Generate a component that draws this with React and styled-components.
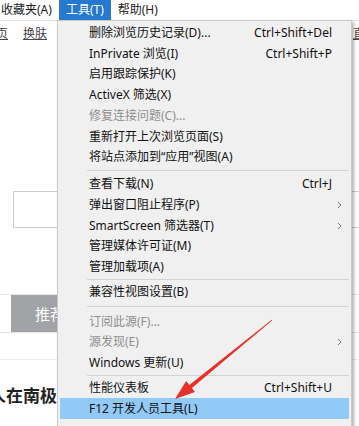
import styled, { createGlobalStyle } from "styled-components";

const GlobalStyle = createGlobalStyle`
    html, body {
        margin: 0;
        padding: 0;
        background: #fff;
    }
    body {
        font-family: "Noto Sans", "Noto Sans CJK SC", sans-serif;
    }
`;

const Screen = styled.div`
    position: relative;
    width: 359px;
    height: 426px;
    overflow: hidden;
    background: #fff;
`;

/* 顶部菜单栏 */
const MenuBar = styled.div`
    display: flex;
    height: 20px;
    margin-left: -6px;
    border-bottom: 1px solid #e2e2e2;
    font-size: 12px;
`;

const MenuBarItem = styled.div`
    padding: 0 7px;
    line-height: 20px;
    color: ${(p) => (p.$active ? "#fff" : "#1a1a1a")};
    background: ${(p) => (p.$active ? "#2579cf" : "transparent")};
`;

/* 页面内容（被菜单挡住的部分） */
const NavRow = styled.div`
    display: flex;
    align-items: center;
    gap: 15px;
    width: 377px;
    height: 24px;
    font-size: 12px;
`;

const NavLink = styled.a`
    color: #444;
    text-decoration: underline;
    margin-left: ${(p) => (p.$cut ? "-16px" : "0")};

    &:last-child {
        margin-left: auto;
    }
`;

const SearchBox = styled.div`
    margin: 146px 0 0 13px;
    width: 420px;
    height: 35px;
    border: 1px solid #cdcdcd;
`;

const TabBar = styled.div`
    display: flex;
    margin-top: 66px;
    width: 400px;
    height: 37px;
    border-top: 1px solid #e6e6e6;
    border-bottom: 1px solid #e6e6e6;
`;

const Tab = styled.div`
    margin-left: 11px;
    padding: 0 20px 0 24px;
    display: flex;
    align-items: center;
    background: #a1a3a7;
    color: #fff;
    font-size: 15px;
`;

const Divider = styled.div`
    margin-top: 26px;
    width: 400px;
    border-top: 1px solid #ececec;
`;

const Headline = styled.div`
    margin: 24px 0 0 -11px;
    font-size: 17px;
    font-weight: 700;
    line-height: 24px;
    color: #222;
    white-space: nowrap;
`;

/* 工具下拉菜单 */
const Dropdown = styled.div`
    position: absolute;
    left: 57px;
    top: 20px;
    width: 295px;
    box-sizing: border-box;
    padding: 1.5px 2px 20px;
    background: #f0f0f0;
    border: 1px solid #c9c9c9;
    box-shadow: 2px 2px 3px rgba(0, 0, 0, 0.3);
    font-size: 12px;
    z-index: 10;
`;

const Item = styled.div`
    display: grid;
    grid-template-columns: 1fr auto 17px;
    align-items: center;
    height: 20.75px;
    padding-left: 29px;
    line-height: 1;
    white-space: nowrap;
    color: ${(p) => (p.$disabled ? "#8e8e8e" : "#111")};
    background: ${(p) => (p.$active ? "#91c9f7" : "transparent")};
`;

const Shortcut = styled.span`
    text-align: right;
`;

const Chevron = styled.svg`
    margin-left: 5px;
`;

const Separator = styled.div`
    height: 1px;
    margin: ${(p) => p.$space}px 0 ${(p) => p.$space}px 27px;
    background: #d3d3d3;
`;

const Annotation = styled.svg`
    position: absolute;
    left: 0;
    top: 0;
    z-index: 20;
    pointer-events: none;
`;

const groups = [
    {
        space: 2.5,
        items: [
            { label: "删除浏览历史记录(D)...", key: "Ctrl+Shift+Del" },
            { label: "InPrivate 浏览(I)", key: "Ctrl+Shift+P" },
            { label: "启用跟踪保护(K)" },
            { label: "ActiveX 筛选(X)" },
            { label: "修复连接问题(C)...", disabled: true },
            { label: "重新打开上次浏览页面(S)" },
            { label: "将站点添加到“应用”视图(A)" },
        ],
    },
    {
        space: 1.5,
        items: [
            { label: "查看下载(N)", key: "Ctrl+J" },
            { label: "弹出窗口阻止程序(P)", sub: true },
            { label: "SmartScreen 筛选器(T)", sub: true },
            { label: "管理媒体许可证(M)" },
            { label: "管理加载项(A)" },
        ],
    },
    {
        space: 4,
        items: [{ label: "兼容性视图设置(B)" }],
    },
    {
        space: 1.5,
        items: [
            { label: "订阅此源(F)...", disabled: true },
            { label: "源发现(E)", disabled: true, sub: true },
            { label: "Windows 更新(U)" },
        ],
    },
    {
        items: [
            { label: "性能仪表板", key: "Ctrl+Shift+U" },
            { label: "F12 开发人员工具(L)", active: true },
        ],
    },
];

const MenuItem = ({ item }) => (
    <Item $disabled={item.disabled} $active={item.active}>
        <span>{item.label}</span>
        <Shortcut>{item.key}</Shortcut>
        <span>
            {item.sub && (
                <Chevron width="5" height="8" viewBox="0 0 5 8">
                    <polyline points="1,1 4,4 1,7" fill="none" stroke="#7a7a7a" strokeWidth="1" />
                </Chevron>
            )}
        </span>
    </Item>
);

const App = () => {
    return (
        <Screen>
            <GlobalStyle />

            <MenuBar>
                <MenuBarItem>收藏夹(A)</MenuBarItem>
                <MenuBarItem $active>工具(T)</MenuBarItem>
                <MenuBarItem>帮助(H)</MenuBarItem>
            </MenuBar>

            <NavRow>
                <NavLink $cut>首页</NavLink>
                <NavLink>换肤</NavLink>
                <NavLink>直播</NavLink>
            </NavRow>

            <SearchBox />

            <TabBar>
                <Tab>推荐</Tab>
            </TabBar>

            <Divider />

            <Headline>人在南极仁爱</Headline>

            <Dropdown>
                {groups.map((group, gi) => (
                    <div key={gi}>
                        {group.items.map((item) => (
                            <MenuItem key={item.label} item={item} />
                        ))}
                        {group.space && <Separator $space={group.space} />}
                    </div>
                ))}
            </Dropdown>

            {/* 红色标注箭头 */}
            <Annotation width="359" height="426" viewBox="0 0 359 426">
                <polygon
                    points="175,399 195,392 191.9,388.1 272.3,320.3 271.7,319.7 189.3,384.9 186.2,381"
                    fill="#e8302a"
                />
            </Annotation>
        </Screen>
    );
};

export default App;
